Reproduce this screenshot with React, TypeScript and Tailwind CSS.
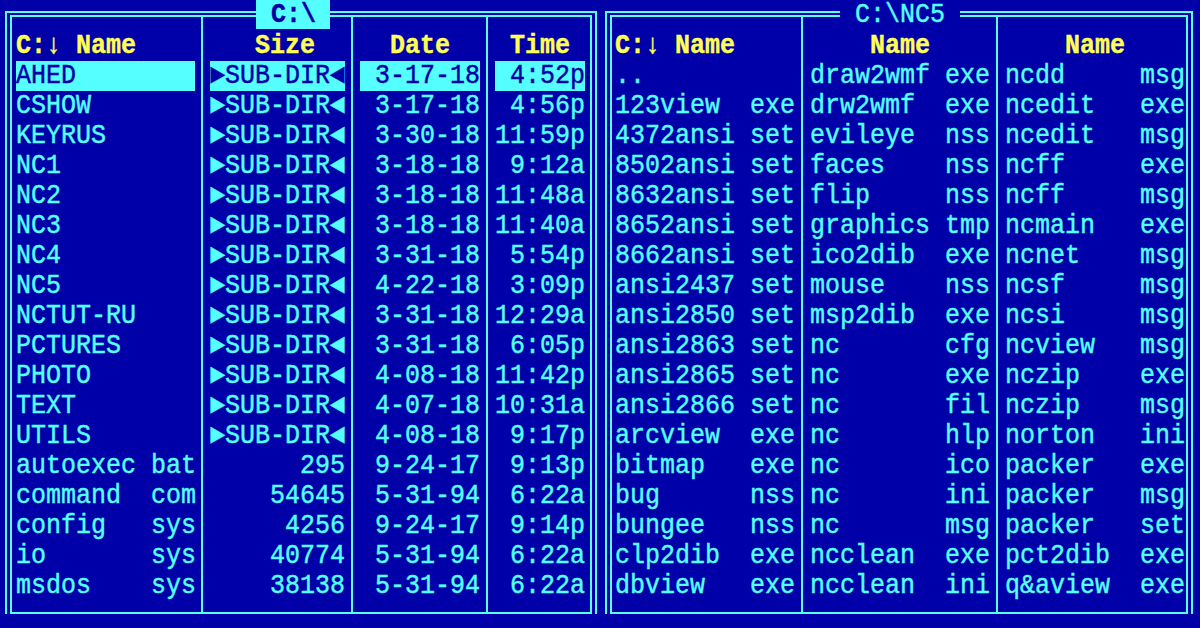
import React from 'react';

type Row = { name: string; ext?: string; size?: string; date?: string; time?: string; dir?: boolean };

const LEFT: Row[] = [
  { name: 'AHED', dir: true, date: '3-17-18', time: '4:52p' },
  { name: 'CSHOW', dir: true, date: '3-17-18', time: '4:56p' },
  { name: 'KEYRUS', dir: true, date: '3-30-18', time: '11:59p' },
  { name: 'NC1', dir: true, date: '3-18-18', time: '9:12a' },
  { name: 'NC2', dir: true, date: '3-18-18', time: '11:48a' },
  { name: 'NC3', dir: true, date: '3-18-18', time: '11:40a' },
  { name: 'NC4', dir: true, date: '3-31-18', time: '5:54p' },
  { name: 'NC5', dir: true, date: '4-22-18', time: '3:09p' },
  { name: 'NCTUT-RU', dir: true, date: '3-31-18', time: '12:29a' },
  { name: 'PCTURES', dir: true, date: '3-31-18', time: '6:05p' },
  { name: 'PHOTO', dir: true, date: '4-08-18', time: '11:42p' },
  { name: 'TEXT', dir: true, date: '4-07-18', time: '10:31a' },
  { name: 'UTILS', dir: true, date: '4-08-18', time: '9:17p' },
  { name: 'autoexec', ext: 'bat', size: '295', date: '9-24-17', time: '9:13p' },
  { name: 'command', ext: 'com', size: '54645', date: '5-31-94', time: '6:22a' },
  { name: 'config', ext: 'sys', size: '4256', date: '9-24-17', time: '9:14p' },
  { name: 'io', ext: 'sys', size: '40774', date: '5-31-94', time: '6:22a' },
  { name: 'msdos', ext: 'sys', size: '38138', date: '5-31-94', time: '6:22a' },
];

const RIGHT: string[][] = [
  ['..', '123view exe', '4372ansi set', '8502ansi set', '8632ansi set', '8652ansi set', '8662ansi set', 'ansi2437 set', 'ansi2850 set', 'ansi2863 set', 'ansi2865 set', 'ansi2866 set', 'arcview exe', 'bitmap exe', 'bug nss', 'bungee nss', 'clp2dib exe', 'dbview exe'],
  ['draw2wmf exe', 'drw2wmf exe', 'evileye nss', 'faces nss', 'flip nss', 'graphics tmp', 'ico2dib exe', 'mouse nss', 'msp2dib exe', 'nc cfg', 'nc exe', 'nc fil', 'nc hlp', 'nc ico', 'nc ini', 'nc msg', 'ncclean exe', 'ncclean ini'],
  ['ncdd msg', 'ncedit exe', 'ncedit msg', 'ncff exe', 'ncff msg', 'ncmain exe', 'ncnet msg', 'ncsf msg', 'ncsi msg', 'ncview msg', 'nczip exe', 'nczip msg', 'norton ini', 'packer exe', 'packer msg', 'packer set', 'pct2dib exe', 'q&aview exe'],
];

const fmtName = (s: string) => {
  if (s === '..') return '..';
  const [n, e = ''] = s.split(' ');
  return n.padEnd(8) + ' ' + e;
};

// DOS glyphs are taller than the TTF ones, stretch them a bit
const Txt = ({ children }: { children: React.ReactNode }) => (
  <span className="inline-block scale-y-110 [-webkit-text-stroke:0.4px_currentColor]">{children}</span>
);

const Cell = ({ text, hl }: { text: string; hl?: boolean }) => (
  <div className={`h-[30px] whitespace-pre ${hl ? 'bg-[#55ffff] text-[#0000a8]' : 'text-[#55ffff]'}`}>
    <Txt>{text}</Txt>
  </div>
);

const Header = ({ text }: { text: string }) => (
  <div className="h-[30px] whitespace-pre font-bold text-[#ffff55]">
    <Txt>{text}</Txt>
  </div>
);

const Divider = () => (
  <div className="w-[15px] shrink-0 pl-[6px]">
    <div className="w-[2px] h-full bg-[#55ffff]" />
  </div>
);

const Frame = ({ children, outer }: { children: React.ReactNode; outer: string }) => (
  <div className={`relative w-[600px] shrink-0 pt-[11px] ${outer}`}>
    <div className="h-full border-t-2 border-x-2 border-[#55ffff] pt-[2px] px-[3px]">
      <div className="h-full border-t-2 border-x-2 border-[#55ffff] flex flex-col">
        {children}
        <div className="border-t-2 border-[#55ffff]" />
      </div>
    </div>
  </div>
);

export default function App() {
  return (
    <div className="w-[1200px] h-[628px] overflow-hidden bg-[#0000a8] flex font-['Liberation_Mono','DejaVu_Sans_Mono',monospace] text-[25px] leading-[30px]">
      {/* left panel - full view */}
      <div className="relative">
        <Frame outer="pl-[5px] pr-[3px]">
          <div className="flex h-[595px] shrink-0">
            <div className="w-[4px] shrink-0" />
            <div className="w-[179px] shrink-0 pt-[14px]">
              <Header text="C:↓ Name" />
              {LEFT.map((r, i) => (
                <Cell key={i} hl={i === 0} text={r.dir ? r.name : r.name.padEnd(8) + ' ' + (r.ext ?? '')} />
              ))}
            </div>
            <Divider />
            <div className="w-[135px] shrink-0 pt-[14px]">
              <Header text="   Size" />
              {LEFT.map((r, i) => (
                <Cell key={i} hl={i === 0} text={r.dir ? '►SUB-DIR◄' : (r.size ?? '').padStart(9)} />
              ))}
            </div>
            <Divider />
            <div className="w-[120px] shrink-0 pt-[14px]">
              <Header text="  Date" />
              {LEFT.map((r, i) => (
                <Cell key={i} hl={i === 0} text={(r.date ?? '').padStart(8)} />
              ))}
            </div>
            <Divider />
            <div className="w-[90px] shrink-0 pt-[14px]">
              <Header text=" Time" />
              {LEFT.map((r, i) => (
                <Cell key={i} hl={i === 0} text={(r.time ?? '').padStart(6)} />
              ))}
            </div>
          </div>
        </Frame>
        <div className="absolute -top-px left-[256px] h-[30px] w-[74px] whitespace-pre bg-[#55ffff] text-[#0000a8] font-bold pt-[1px]">
          <Txt>{' C:\\'}</Txt>
        </div>
      </div>

      {/* right panel - brief view */}
      <div className="relative">
        <Frame outer="pl-[5px] pr-[7px]">
          <div className="flex h-[595px] shrink-0">
            <div className="w-[3px] shrink-0" />
            {RIGHT.map((col, c) => (
              <React.Fragment key={c}>
                {c > 0 && <Divider />}
                <div className="w-[180px] shrink-0 pt-[14px]">
                  <Header text={c === 0 ? 'C:↓ Name' : '    Name'} />
                  {col.map((f, i) => (
                    <Cell key={i} text={fmtName(f)} />
                  ))}
                </div>
              </React.Fragment>
            ))}
          </div>
        </Frame>
        <div className="absolute -top-px left-[240px] h-[30px] w-[120px] whitespace-pre bg-[#0000a8] text-[#55ffff] pt-[1px]">
          <Txt>{' C:\\NC5 '}</Txt>
        </div>
      </div>
    </div>
  );
}
